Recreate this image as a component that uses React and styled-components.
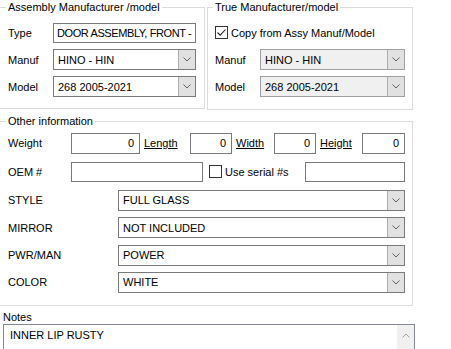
import React from "react";
import styled, { createGlobalStyle } from "styled-components";

const GlobalStyle = createGlobalStyle`
  body {
    margin: 0;
    background: #ffffff;
    font-family: "Liberation Sans", Arial, sans-serif;
    font-size: 11px;
    color: #000000;
  }
`;

const Page = styled.div`
  width: 451px;
  height: 349px;
  overflow: hidden;
  background: #ffffff;
`;

const TopRow = styled.div`
  display: flex;
  gap: 2px;
`;

const Group = styled.fieldset`
  box-sizing: border-box;
  margin: 0;
  margin-left: ${(p) => p.$ml || 0}px;
  margin-top: ${(p) => p.$mt || 0}px;
  width: ${(p) => p.$w}px;
  height: ${(p) => p.$h}px;
  padding: ${(p) => p.$pt || 5}px 0 0 ${(p) => p.$pl || 8}px;
  border: 1px solid #dcdcdc;
  min-width: 0;
`;

const Legend = styled.legend`
  padding: 0 2px;
  margin-left: -2px;
  line-height: 14px;
  height: 14px;
`;

const Row = styled.div`
  display: flex;
  align-items: center;
  height: ${(p) => p.$h || 27}px;
`;

const Label = styled.span`
  width: ${(p) => p.$w}px;
  margin-left: ${(p) => p.$ml || 0}px;
  flex-shrink: 0;
  white-space: nowrap;
`;

const LinkLabel = styled(Label)`
  text-decoration: underline;
`;

const Field = styled.div`
  box-sizing: border-box;
  width: ${(p) => p.$w}px;
  height: ${(p) => p.$h || 20}px;
  border: 1px solid #7a7a7a;
  background: #ffffff;
  padding: 0 ${(p) => (p.$right ? 5 : p.$tight ? 3 : 4)}px;
  letter-spacing: ${(p) => (p.$tight ? "-0.4px" : "normal")};
  display: flex;
  align-items: center;
  justify-content: ${(p) => (p.$right ? "flex-end" : "flex-start")};
  white-space: nowrap;
  overflow: hidden;
  flex-shrink: 0;
`;

const ComboBox = styled.div`
  box-sizing: border-box;
  width: ${(p) => p.$w}px;
  height: 21px;
  border: 1px solid ${(p) => (p.$disabled ? "#a0a0a0" : "#7a7a7a")};
  background: ${(p) => (p.$disabled ? "#f0f0f0" : "#ffffff")};
  display: flex;
  flex-shrink: 0;
`;

const ComboText = styled.div`
  flex: 1;
  padding-left: 4px;
  display: flex;
  align-items: center;
  white-space: nowrap;
  overflow: hidden;
`;

const DropButton = styled.div`
  width: 16px;
  background: #e1e1e1;
  border-left: 1px solid #adadad;
  display: flex;
  align-items: center;
  justify-content: center;
`;

const Box = styled.span`
  box-sizing: border-box;
  width: 13px;
  height: 13px;
  border: 1px solid #333333;
  background: #ffffff;
  margin-left: ${(p) => p.$ml || 0}px;
  margin-right: ${(p) => p.$mr || 3}px;
  display: flex;
  align-items: center;
  justify-content: center;
  flex-shrink: 0;
`;

const NotesLabel = styled.div`
  margin: 4px 0 0 3px;
  line-height: 14px;
`;

const NotesBox = styled.div`
  box-sizing: border-box;
  margin-left: 3px;
  width: 412px;
  height: 44px;
  border: 1px solid #828790;
  display: flex;
`;

const NotesText = styled.div`
  flex: 1;
  padding: 4px 0 0 6px;
`;

const ScrollBar = styled.div`
  width: 17px;
  background: #f0f0f0;
  display: flex;
  justify-content: center;
  padding-top: 8px;
`;

const Chevron = ({ up, color = "#606060" }) => (
  <svg width="8" height="5" viewBox="0 0 8 5">
    <path
      d={up ? "M0.5 4.5 L4 1 L7.5 4.5" : "M0.5 0.5 L4 4 L7.5 0.5"}
      fill="none"
      stroke={color}
      strokeWidth="1"
    />
  </svg>
);

const Combo = ({ w, value, disabled }) => (
  <ComboBox $w={w} $disabled={disabled}>
    <ComboText>{value}</ComboText>
    <DropButton>
      <Chevron />
    </DropButton>
  </ComboBox>
);

const CheckBox = ({ checked, ml, mr }) => (
  <Box $ml={ml} $mr={mr}>
    {checked && (
      <svg width="11" height="11" viewBox="0 0 11 11">
        <path d="M1.5 5.5 L4.2 8.2 L9.5 2.5" fill="none" stroke="#222" strokeWidth="1.1" />
      </svg>
    )}
  </Box>
);

const details = [
  ["STYLE", "FULL GLASS", 28],
  ["MIRROR", "NOT INCLUDED", 27],
  ["PWR/MAN", "POWER", 28],
  ["COLOR", "WHITE", 26],
];

const App = () => {
  return (
    <Page>
      <GlobalStyle />
      <TopRow>
        <Group $ml={-1} $w={206} $h={109}>
          <Legend>Assembly Manufacturer /model</Legend>
          <Row>
            <Label $w={45}>Type</Label>
            <Field $w={143} $tight>DOOR ASSEMBLY, FRONT -</Field>
          </Row>
          <Row>
            <Label $w={45}>Manuf</Label>
            <Combo w={143} value="HINO - HIN" />
          </Row>
          <Row>
            <Label $w={45}>Model</Label>
            <Combo w={143} value="268 2005-2021" />
          </Row>
        </Group>
        <Group $w={206} $h={110} $pl={7}>
          <Legend>True Manufacturer/model</Legend>
          <Row>
            <CheckBox checked />
            <span>Copy from Assy Manuf/Model</span>
          </Row>
          <Row>
            <Label $w={45}>Manuf</Label>
            <Combo w={145} value="HINO - HIN" disabled />
          </Row>
          <Row>
            <Label $w={45}>Model</Label>
            <Combo w={145} value="268 2005-2021" disabled />
          </Row>
        </Group>
      </TopRow>

      <Group $ml={-1} $mt={4} $w={414} $h={192} $pt={1}>
        <Legend>Other information</Legend>
        <Row $h={28}>
          <Label $w={63}>Weight</Label>
          <Field $w={69} $h={21} $right>0</Field>
          <LinkLabel $w={46} $ml={4}>Length</LinkLabel>
          <Field $w={42} $h={21} $right>0</Field>
          <LinkLabel $w={38} $ml={4}>Width</LinkLabel>
          <Field $w={42} $h={21} $right>0</Field>
          <LinkLabel $w={42} $ml={4}>Height</LinkLabel>
          <Field $w={43} $h={21} $right>0</Field>
        </Row>
        <Row $h={29}>
          <Label $w={63}>OEM #</Label>
          <Field $w={132} />
          <CheckBox ml={6} mr={3} />
          <Label $w={80}>Use serial #s</Label>
          <Field $w={100} />
        </Row>
        {details.map(([label, value, h]) => (
          <Row $h={h} key={label}>
            <Label $w={110}>{label}</Label>
            <Combo w={287} value={value} />
          </Row>
        ))}
      </Group>

      <NotesLabel>Notes</NotesLabel>
      <NotesBox>
        <NotesText>INNER LIP RUSTY</NotesText>
        <ScrollBar>
          <Chevron up color="#a3a3a3" />
        </ScrollBar>
      </NotesBox>
    </Page>
  );
};

export default App;
